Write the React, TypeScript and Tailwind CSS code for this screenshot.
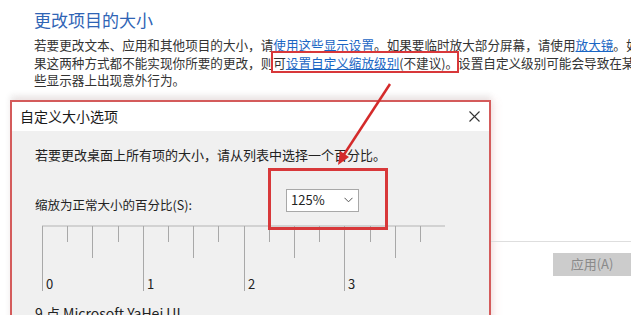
import React from "react";

const ticks = Array.from({ length: 16 }, (_, i) => i);

function Ruler() {
  return (
    <svg width="410" height="72" className="block">
      <line x1="0" y1="1" x2="403" y2="1" stroke="#b4b4b4" strokeWidth="1" />
      {ticks.map((i) => {
        const x = Math.round(i * 25.2) + 0.5;
        const len = i % 4 === 0 ? 66 : i % 4 === 2 ? 33 : 17;
        return <line key={i} x1={x} y1="1" x2={x} y2={len} stroke="#a8a8a8" strokeWidth="1" />;
      })}
      {[0, 1, 2, 3].map((n) => (
        <text
          key={n}
          x={Math.round(n * 100.8) + 4}
          y="64"
          fontSize="13"
          fill="#222"
          fontFamily='"Noto Sans CJK SC", "Noto Sans", sans-serif'
        >
          {n}
        </text>
      ))}
    </svg>
  );
}

export default function App() {
  return (
    <div
      className="relative w-[631px] h-[315px] overflow-hidden bg-white text-[#333]"
      style={{ fontFamily: '"Noto Sans CJK SC", "Noto Sans", sans-serif' }}
    >
      {/* settings page header */}
      <div className="pl-[34px] pt-[7px]">
        <div className="text-[17px] leading-[26px] text-[#2f64b5]">更改项目的大小</div>
        <div className="mt-[3px] text-[12.6px] leading-[17.5px] whitespace-nowrap">
          <div>
            若要更改文本、应用和其他项目的大小，请
            <span className="text-[#1a66c4] underline">使用这些显示设置</span>
            。如果要临时放大部分屏幕，请使用
            <span className="text-[#1a66c4] underline">放大镜</span>
            。如果要
          </div>
          <div>
            果这两种方式都不能实现你所要的更改，则
            <span className="relative">
              可<span className="text-[#1a66c4] underline">设置自定义缩放级别</span>(不建议)。
              <span className="absolute -left-[2px] -right-[1px] -top-[2px] -bottom-[1px] border-2 border-[#d8383a]" />
            </span>
            设置自定义级别可能会导致在某
          </div>
          <div>些显示器上出现意外行为。</div>
        </div>
      </div>

      <div className="mt-[11px] flex">
        <div className="w-[10px]" />
        {/* dialog */}
        <div className="w-[481px] h-[230px] border-2 border-[#d45b5b] bg-[#f0f0f0] shadow-[0_-5px_6px_rgba(0,0,0,0.07),4px_0_8px_rgba(220,120,120,0.15)]">
          <div className="h-[29px] bg-white flex items-center justify-between pl-[8px] pr-[9px]">
            <span className="text-[14px] text-[#1a1a1a]">自定义大小选项</span>
            <svg width="11" height="11" viewBox="0 0 11 11">
              <path d="M0.5 0.5 L10.5 10.5 M10.5 0.5 L0.5 10.5" stroke="#333" strokeWidth="1.1" />
            </svg>
          </div>
          <div className="pl-[23px] pt-[15px] text-[#222]">
            <div className="text-[13px] leading-[18px]">若要更改桌面上所有项的大小，请从列表中选择一个百分比。</div>
            <div className="mt-[25px] flex items-start">
              <div className="w-[251px] pt-[4px] text-[12.5px] leading-[23px]">缩放为正常大小的百分比(S):</div>
              <div className="relative w-[73px] h-[23px] bg-white border border-[#a8a8a8] flex items-center justify-between pl-[4px] pr-[5px]">
                <span className="text-[13px]">125%</span>
                <svg width="9" height="6" viewBox="0 0 9 6">
                  <path d="M0.5 0.8 L4.5 4.8 L8.5 0.8" stroke="#555" strokeWidth="1" fill="none" />
                </svg>
                <span className="absolute -left-[19px] -top-[22px] w-[120px] h-[62px] border-[3px] border-[#d8383a]" />
              </div>
            </div>
            <div className="mt-[9px] ml-[7px]">
              <Ruler />
            </div>
            <div className="mt-[6px] text-[14px] leading-[20px]">9 点 Microsoft YaHei UI</div>
          </div>
        </div>
        {/* page behind dialog */}
        <div className="flex-1">
          <div className="h-[142px] border-b border-[#dedede]" />
          <div className="mt-[11px] ml-[62px] w-[78px] h-[23px] bg-[#cccccc] text-[#8a8a8a] text-[13px] flex items-center justify-center">
            应用(A)
          </div>
        </div>
      </div>

      {/* annotation arrow */}
      <svg className="absolute inset-0 pointer-events-none" width="631" height="315">
        <line x1="390" y1="84" x2="343" y2="156" stroke="#d42a2a" strokeWidth="2.5" />
        <polygon points="338,165 349,157 340,151" fill="#d42a2a" />
      </svg>
    </div>
  );
}
